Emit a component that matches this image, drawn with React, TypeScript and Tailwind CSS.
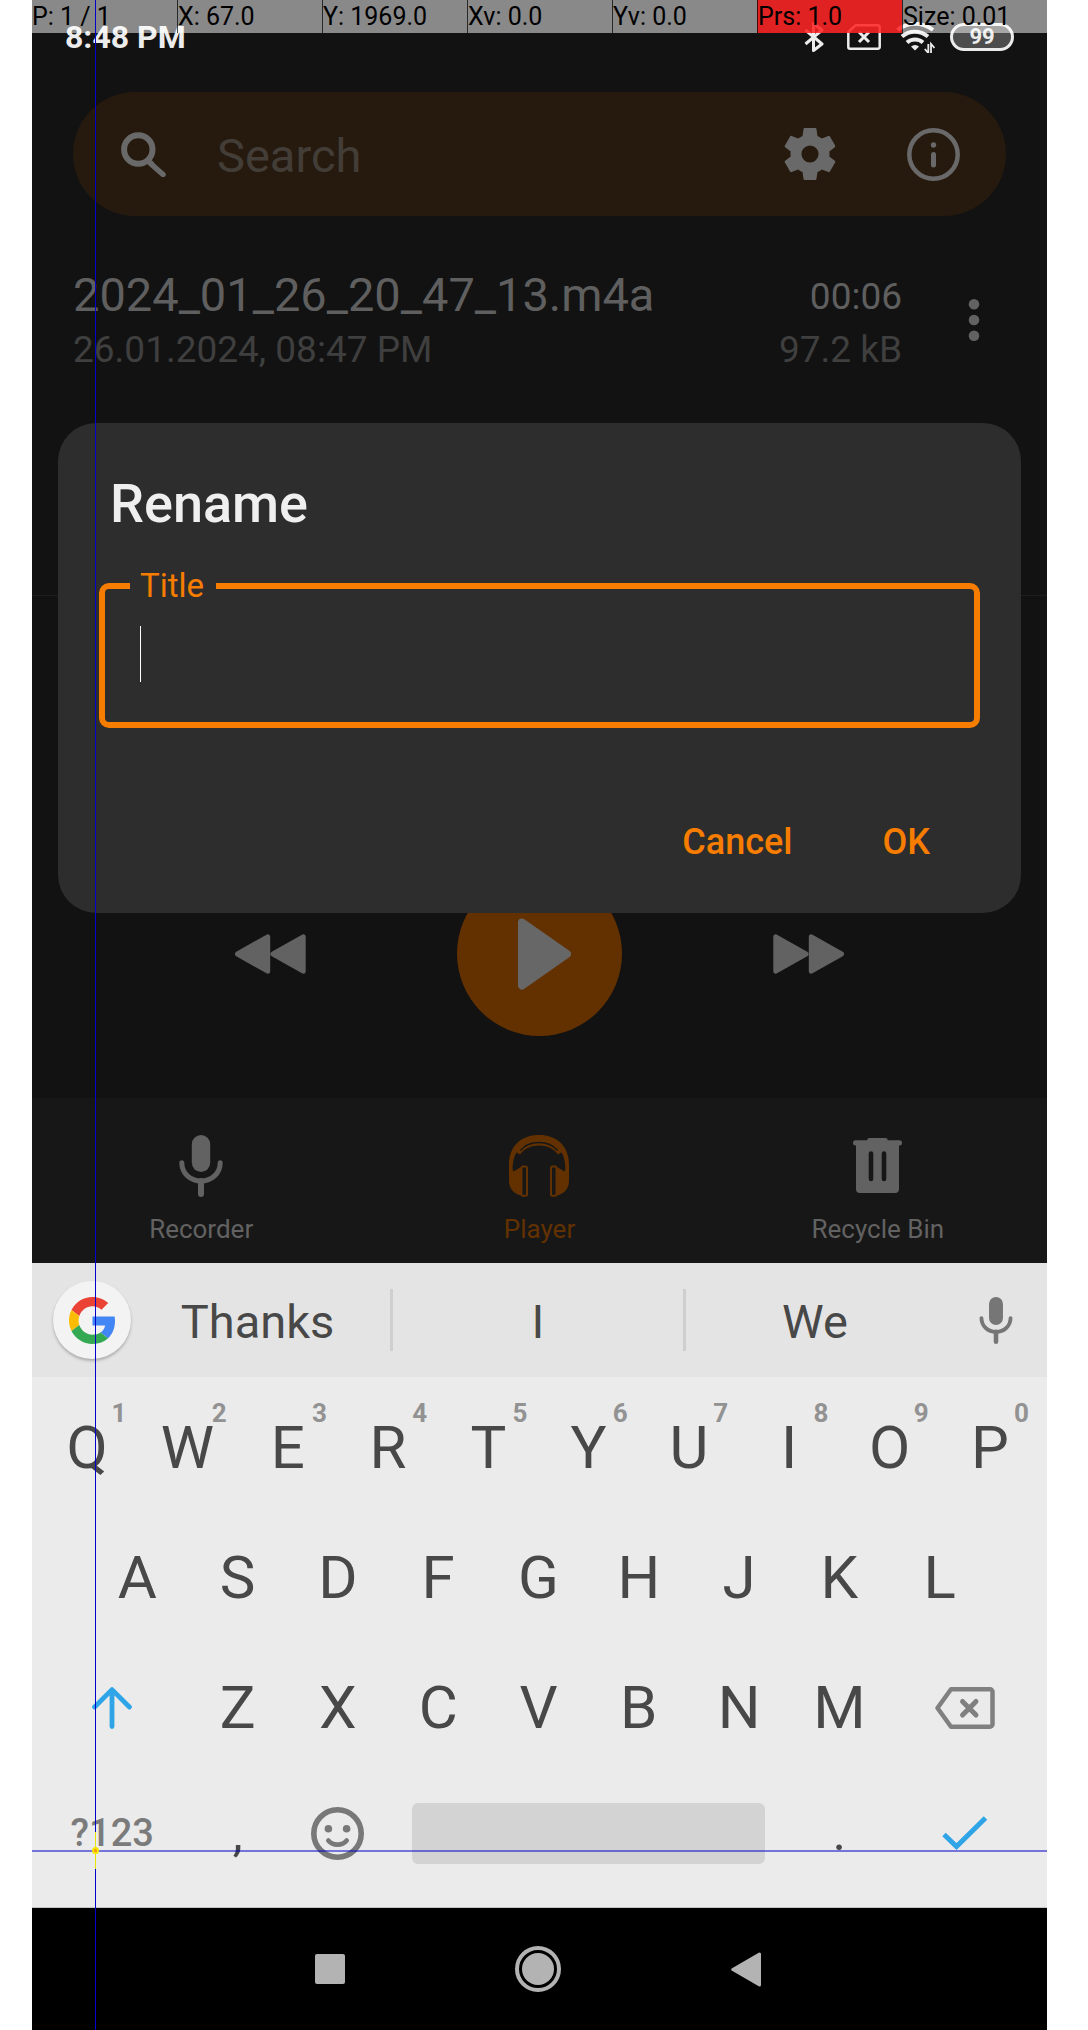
import React from "react";

type IconProps = { className?: string };

function SearchIcon({ className }: IconProps) {
  return (
    <svg viewBox="0 0 45 45" className={className} fill="none" stroke="currentColor" aria-hidden="true">
      <circle cx="17.3" cy="17.5" r="14.2" strokeWidth="6" />
      <path d="M29.5 31.5 42 42.5" strokeWidth="5.5" strokeLinecap="round" />
      <path d="M27 28l5 5" strokeWidth="5" />
    </svg>
  );
}

function GearIcon({ className }: IconProps) {
  return (
    <svg viewBox="2 2 20 20" className={className} fill="currentColor" aria-hidden="true">
      <path d="M19.43 12.98c.04-.32.07-.64.07-.98s-.03-.66-.07-.98l2.11-1.65c.19-.15.24-.42.12-.64l-2-3.46c-.12-.22-.39-.3-.61-.22l-2.49 1c-.52-.4-1.08-.73-1.69-.98l-.38-2.65C14.46 2.18 14.25 2 14 2h-4c-.25 0-.46.18-.49.42l-.38 2.65c-.61.25-1.17.59-1.69.98l-2.49-1c-.23-.09-.49 0-.61.22l-2 3.46c-.13.22-.07.49.12.64l2.11 1.65c-.04.32-.07.65-.07.98s.03.66.07.98l-2.11 1.65c-.19.15-.24.42-.12.64l2 3.46c.12.22.39.3.61.22l2.49-1c.52.4 1.08.73 1.69.98l.38 2.65c.03.24.24.42.49.42h4c.25 0 .46-.18.49-.42l.38-2.65c.61-.25 1.17-.59 1.69-.98l2.49 1c.23.09.49 0 .61-.22l2-3.46c.12-.22.07-.49-.12-.64l-2.11-1.65zM12 15.3a3.3 3.3 0 1 1 0-6.6 3.3 3.3 0 0 1 0 6.6z" />
    </svg>
  );
}

function InfoIcon({ className }: IconProps) {
  return (
    <svg viewBox="0 0 53 53" className={className} fill="none" stroke="currentColor" aria-hidden="true">
      <circle cx="26.5" cy="26.5" r="24.2" strokeWidth="4.5" />
      <circle cx="26.5" cy="17" r="2.7" fill="currentColor" stroke="none" />
      <path d="M26.5 26.5v10.5" strokeWidth="5" strokeLinecap="round" />
    </svg>
  );
}

function MicIcon({ className }: IconProps) {
  return (
    <svg viewBox="0 0 44 62" className={className} fill="none" stroke="currentColor" aria-hidden="true">
      <rect x="12.8" y="0" width="18.4" height="37" rx="9.2" fill="currentColor" stroke="none" />
      <path d="M2.8 27.8C2.8 38.5 11.5 46 22 46S41.2 38.5 41.2 27.8" strokeWidth="5" strokeLinecap="round" />
      <path d="M22 46v13" strokeWidth="6" strokeLinecap="round" />
    </svg>
  );
}

function HeadphonesIcon({ className }: IconProps) {
  return (
    <svg viewBox="0 0 60 62" className={className} fill="none" stroke="currentColor" aria-hidden="true">
      <path
        d="M0 30C0 10 13 0 30 0s30 10 30 30v6h-3.5C56.5 28 55 21 52.5 17.5L49 19.5C44.5 13.5 38 10.5 30 10.5S15.5 13.5 11 19.5L7.5 17.5C5 21 3.5 28 3.5 36H0Z"
        fill="currentColor"
        stroke="none"
      />
      <path d="M11.5 15.5C16 10 22 7.5 30 7.5s14 2.5 18.5 8" stroke="#171717" strokeWidth="1.6" />
      <path d="M0 28 4.5 36.5 12 32v28.5C5 58.5 0 54 0 46Z" fill="currentColor" stroke="none" />
      <path d="M60 28l-4.5 8.5L48 32v28.5C55 58.5 60 54 60 46Z" fill="currentColor" stroke="none" />
      <rect x="12.5" y="31.5" width="5.5" height="29.3" rx="1.5" fill="#171717" strokeWidth="2" />
      <rect x="42" y="31.5" width="5.5" height="29.3" rx="1.5" fill="#171717" strokeWidth="2" />
    </svg>
  );
}

function TrashIcon({ className }: IconProps) {
  return (
    <svg viewBox="0 0 49 55" className={className} fill="currentColor" aria-hidden="true">
      <rect x="0" y="2.3" width="49" height="5.2" rx="2.5" />
      <rect x="14.3" y="0" width="20.4" height="5" rx="2" />
      <path
        fillRule="evenodd"
        d="M3 6h43v45a4 4 0 0 1-4 4H7a4 4 0 0 1-4-4ZM18 13.2a2.3 2.3 0 0 0-2.3 2.3v25.5a2.3 2.3 0 0 0 4.6 0V15.5A2.3 2.3 0 0 0 18 13.2ZM31 13.2a2.3 2.3 0 0 0-2.3 2.3v25.5a2.3 2.3 0 0 0 4.6 0V15.5A2.3 2.3 0 0 0 31 13.2Z"
      />
    </svg>
  );
}

function ForwardIcon({ className }: IconProps) {
  return (
    <svg viewBox="0 0 71 40" className={className} fill="currentColor" stroke="currentColor" strokeWidth="5" strokeLinejoin="round" aria-hidden="true">
      <path d="M2.8 2.8 33 20 2.8 37.2ZM38.3 2.8 68.5 20 38.3 37.2Z" />
    </svg>
  );
}

function PlayIcon({ className }: IconProps) {
  return (
    <svg viewBox="0 0 53 72" className={className} fill="currentColor" stroke="currentColor" strokeWidth="8" strokeLinejoin="round" aria-hidden="true">
      <path d="M4 4.5 49 36 4 67.5Z" />
    </svg>
  );
}

function GoogleIcon({ className }: IconProps) {
  return (
    <svg viewBox="0 0 48 48" className={className} aria-hidden="true">
      <path fill="#EA4335" d="M24 9.5c3.54 0 6.71 1.22 9.21 3.6l6.85-6.85C35.9 2.38 30.47 0 24 0 14.62 0 6.51 5.38 2.56 13.22l7.98 6.19C12.43 13.72 17.74 9.5 24 9.5z" />
      <path fill="#4285F4" d="M46.98 24.55c0-1.57-.15-3.09-.38-4.55H24v9.02h12.94c-.58 2.96-2.26 5.48-4.78 7.18l7.73 6c4.51-4.18 7.09-10.36 7.09-17.65z" />
      <path fill="#FBBC05" d="M10.53 28.59c-.48-1.45-.76-2.99-.76-4.59s.27-3.14.76-4.59l-7.98-6.19C.92 16.46 0 20.12 0 24c0 3.88.92 7.54 2.56 10.78l7.97-6.19z" />
      <path fill="#34A853" d="M24 48c6.48 0 11.93-2.13 15.89-5.81l-7.73-6c-2.15 1.45-4.92 2.3-8.16 2.3-6.26 0-11.57-4.22-13.47-9.91l-7.98 6.19C6.51 42.62 14.62 48 24 48z" />
    </svg>
  );
}

function StatusIcons() {
  return (
    <div className="flex items-center gap-[15px]">
      <svg viewBox="0 0 20 32" className="mr-2 h-8 w-5" fill="none" stroke="currentColor" strokeWidth="3" aria-label="Bluetooth">
        <path d="M1.5 9 18 23 9.5 29.5V2.5L18 9 1.5 23" strokeLinejoin="round" />
      </svg>
      <svg viewBox="0 0 34 26" className="h-[26px] w-[34px]" fill="none" stroke="currentColor" strokeWidth="2.5" aria-label="No SIM">
        <path d="M8.5 1.3H31a1.7 1.7 0 0 1 1.7 1.7v20a1.7 1.7 0 0 1-1.7 1.7H3A1.7 1.7 0 0 1 1.3 23V8Z" strokeLinejoin="round" />
        <path d="M12 8l10 10M22 8 12 18" strokeWidth="3" />
      </svg>
      <svg viewBox="0 0 39 32" className="h-8 w-[39px]" fill="none" stroke="currentColor" strokeWidth="4" aria-label="Wi-Fi">
        <path d="M1.5 9C12 .5 26 .5 37 9" />
        <path d="M6 15.5c7.5-6.5 18-6.5 26 0" />
        <path d="M11 21.5c4.5-4 11.5-4 16 0" />
        <path d="M15 25.5c2.5-2 5.5-2 8 0L19 29.5Z" fill="currentColor" stroke="none" />
        <path d="M32.3 23v9l-3.5-4M35 32v-9l3.5 4" strokeWidth="1.8" />
      </svg>
      <span className="flex h-7 w-16 items-center justify-center rounded-full border-[3px] border-current bg-white/25 text-[22px] leading-[22px] font-bold">
        99
      </span>
    </div>
  );
}

const pointerCells = ["P: 1 / 1", "X: 67.0", "Y: 1969.0", "Xv: 0.0", "Yv: 0.0", "Prs: 1.0", "Size: 0.01"];

function PointerOverlay() {
  return (
    <div className="pointer-events-none absolute inset-0 z-20">
      <div className="grid grid-cols-7 bg-white/50 text-[25px] leading-[33px] text-black">
        {pointerCells.map((cell, i) => (
          <span
            key={cell}
            className={
              (i === 5 ? "bg-[#ff0000]/75 " : "") +
              (i === 0 ? "" : "border-l border-black/70 ") +
              "whitespace-nowrap"
            }
          >
            {cell}
          </span>
        ))}
      </div>
      <div className="absolute inset-y-0 left-[63px] w-px bg-[#0000c8]" />
      <div className="absolute inset-x-0 bottom-[178px] h-0.5 bg-[#0000c8]/50" />
      <div className="absolute bottom-[161px] left-[63px] h-[37px] w-px bg-[#e5e500]" />
      <div className="absolute bottom-[176px] left-[60px] size-[7px] rounded-full border-2 border-[#f5e500] bg-[#ff8c1a]" />
    </div>
  );
}

function RenameDialog() {
  return (
    <form
      role="dialog"
      aria-labelledby="dialog-title"
      onSubmit={(e) => e.preventDefault()}
      className="absolute inset-x-[26px] top-[423px] z-10 rounded-[38px] bg-[#2d2d2d] px-[41px] pt-[46px] pb-[26px]"
    >
      <h1 id="dialog-title" className="px-[11px] text-[54px] leading-[70px] font-medium text-[#efefef]">
        Rename
      </h1>
      <fieldset className="relative mt-[27px] rounded-[10px] border-[6px] border-[#f77d00] pl-[25px]">
        <legend className="h-10 pr-3 pl-2.5 text-[33px] leading-10 text-[#f77d00]">
          <label htmlFor="title">Title</label>
        </legend>
        <div className="flex items-center pt-5 pb-10 pl-[10px]">
          <span className="h-14 w-px bg-white" />
          <input id="title" type="text" className="h-14 w-full bg-transparent text-[46px] text-[#efefef] caret-transparent outline-none" />
        </div>
      </fieldset>
      <div className="mt-[69px] flex justify-end gap-[90px] pr-[50px] text-[36px] leading-[90px] font-medium text-[#f77d00]">
        <button type="button">Cancel</button>
        <button type="submit">OK</button>
      </div>
    </form>
  );
}

function NavItem({ icon, label, active }: { icon: React.ReactNode; label: string; active?: boolean }) {
  return (
    <button
      type="button"
      className={(active ? "text-[#633100] " : "text-[#626262] ") + "flex flex-col items-center pt-9 pb-4 text-[26px] leading-9"}
    >
      <span className="flex h-[63px] items-center justify-center">{icon}</span>
      <span className="mt-3.5">{label}</span>
    </button>
  );
}

function RecorderApp() {
  return (
    <main className="relative flex flex-1 flex-col bg-[#121212]">
      <div className="flex h-[74px] items-center justify-between px-[33px] text-[#ececec]">
        <time className="text-[32px] leading-8 font-bold">8:48 PM</time>
        <StatusIcons />
      </div>

      <div className="mx-[41px] mt-[18px] flex h-[124px] items-center rounded-full bg-[#261a0f] pr-[46px] pl-12 text-[#696969]">
        <SearchIcon className="size-[45px] shrink-0" />
        <input
          type="search"
          aria-label="Search"
          placeholder="Search"
          className="ml-[51px] min-w-0 flex-1 bg-transparent pt-1 text-[47px] leading-[60px] outline-none placeholder:text-[#433d37]"
        />
        <button type="button" aria-label="Settings">
          <GearIcon className="size-[52px]" />
        </button>
        <button type="button" aria-label="About" className="ml-[71px]">
          <InfoIcon className="size-[53px]" />
        </button>
      </div>

      <div className="mt-[49px] flex items-start px-[41px]">
        <div className="flex-1">
          <p className="text-[47px] leading-[60px] text-[#5f5f5f]">2024_01_26_20_47_13.m4a</p>
          <p className="text-[37px] leading-[50px] text-[#3f3f3f]">26.01.2024, 08:47 PM</p>
        </div>
        <div className="text-right text-[37px]">
          <p className="leading-[64px] text-[#5f5f5f]">00:06</p>
          <p className="leading-[42px] text-[#3f3f3f]">97.2 kB</p>
        </div>
        <button type="button" aria-label="More options" className="ml-10 flex w-16 justify-center self-center text-[#626262]">
          <svg viewBox="0 0 12 42" className="h-[42px] w-3" fill="currentColor" aria-hidden="true">
            <circle cx="6" cy="5.3" r="5.3" />
            <circle cx="6" cy="21" r="5.3" />
            <circle cx="6" cy="36.7" r="5.3" />
          </svg>
        </button>
      </div>

      <RenameDialog />

      <section aria-label="Playback" className="mt-auto border-t border-[#1d1d1d] pt-[275px] pb-[62px]">
        <div className="flex h-[165px] items-center justify-center gap-[151px] text-[#626262]">
          <button type="button" aria-label="Rewind">
            <ForwardIcon className="h-10 w-[71px] rotate-180" />
          </button>
          <button type="button" aria-label="Play" className="flex size-[165px] items-center justify-center rounded-full bg-[#633100] pl-[9px] text-[#676767]">
            <PlayIcon className="h-[72px] w-[53px]" />
          </button>
          <button type="button" aria-label="Fast forward">
            <ForwardIcon className="h-10 w-[71px]" />
          </button>
        </div>
      </section>

      <nav className="grid grid-cols-3 bg-[#171717]">
        <NavItem label="Recorder" icon={<MicIcon className="h-[62px] w-11" />} />
        <NavItem label="Player" active icon={<HeadphonesIcon className="h-[62px] w-[60px]" />} />
        <NavItem label="Recycle Bin" icon={<TrashIcon className="h-[55px] w-[49px]" />} />
      </nav>
    </main>
  );
}

function LetterKey({ letter, hint }: { letter: string; hint?: string }) {
  return (
    <button type="button" className="relative min-w-0 flex-[2] text-[60px]">
      {letter}
      {hint && (
        <span className="absolute top-3.5 right-[11px] text-[26px] leading-8 font-bold text-[#929292]">{hint}</span>
      )}
    </button>
  );
}

function Keyboard() {
  return (
    <section aria-label="Keyboard" className="border-b border-[#c4c4c4] bg-[#ebebeb] text-[#484848]">
      <div className="grid h-[114px] grid-cols-[93px_265fr_3px_290fr_3px_258fr_103px] items-center bg-[#e4e4e4] text-[47px] leading-[60px]">
        <button
          type="button"
          aria-label="Google search"
          className="ml-[21px] flex size-[78px] items-center justify-center rounded-full bg-[#f3f3f3] shadow-[0_2px_3px_rgba(0,0,0,0.25)]"
        >
          <GoogleIcon className="size-[47px]" />
        </button>
        <button type="button" className="pt-1">Thanks</button>
        <span className="h-[62px] bg-[#cfcfcf]" />
        <button type="button" className="pt-1">I</button>
        <span className="h-[62px] bg-[#cfcfcf]" />
        <button type="button" className="pt-1">We</button>
        <button type="button" aria-label="Voice input" className="flex justify-center text-[#767676]">
          <MicIcon className="h-[47px] w-[34px]" />
        </button>
      </div>

      <div className="pt-[6px] pr-[7px] pb-[14px] pl-[5px]">
        <div className="flex h-[130px]">
          {"QWERTYUIOP".split("").map((k, i) => (
            <LetterKey key={k} letter={k} hint={String((i + 1) % 10)} />
          ))}
        </div>
        <div className="flex h-[130px]">
          <span className="flex-1" />
          {"ASDFGHJKL".split("").map((k) => (
            <LetterKey key={k} letter={k} />
          ))}
          <span className="flex-1" />
        </div>
        <div className="flex h-[130px]">
          <button type="button" aria-label="Shift" className="flex min-w-0 flex-[3] items-center justify-center text-[#2fa4e7]">
            <svg viewBox="0 0 40 42" className="h-[42px] w-10" fill="none" stroke="currentColor" strokeWidth="4.8" strokeLinecap="round" strokeLinejoin="round" aria-hidden="true">
              <path d="M20 39.5V3M2.6 20 20 2.6 37.4 20" />
            </svg>
          </button>
          {"ZXCVBNM".split("").map((k) => (
            <LetterKey key={k} letter={k} />
          ))}
          <button type="button" aria-label="Backspace" className="flex min-w-0 flex-[3] items-center justify-center text-[#808080]">
            <svg viewBox="0 0 60 42" className="h-[42px] w-[60px]" fill="none" stroke="currentColor" strokeWidth="4.5" strokeLinejoin="round" aria-hidden="true">
              <path d="M16 2.3H55a2.5 2.5 0 0 1 2.5 2.5v32.4a2.5 2.5 0 0 1-2.5 2.5H16L2.5 21Z" />
              <path d="M27.5 14.5 41 28M41 14.5 27.5 28" strokeWidth="5" strokeLinecap="round" />
            </svg>
          </button>
        </div>
        <div className="flex h-[120px]">
          <button type="button" className="min-w-0 flex-[3] text-[38px] font-medium text-[#7b7b7b]">
            ?123
          </button>
          <button type="button" className="min-w-0 flex-[2] text-[50px]">
            ,
          </button>
          <button type="button" aria-label="Emoji" className="flex min-w-0 flex-[2] items-center justify-center text-[#787878]">
            <svg viewBox="0 0 53 53" className="size-[53px]" fill="none" stroke="currentColor" aria-hidden="true">
              <circle cx="26.5" cy="26.5" r="23.7" strokeWidth="5.6" />
              <circle cx="17.4" cy="21.8" r="3.8" fill="currentColor" stroke="none" />
              <circle cx="35.6" cy="21.8" r="3.8" fill="currentColor" stroke="none" />
              <path d="M17.3 33.5c4.5 5.5 13.9 5.5 18.4 0" strokeWidth="4.6" strokeLinecap="round" />
            </svg>
          </button>
          <div className="flex min-w-0 flex-[8] items-center">
            <button type="button" aria-label="Space" className="mx-6 h-[61px] flex-1 rounded-md bg-[#d3d3d3]" />
          </div>
          <button type="button" className="min-w-0 flex-[2] text-[50px]">
            .
          </button>
          <button type="button" aria-label="Done" className="flex min-w-0 flex-[3] items-center justify-center text-[#2fa4e7]">
            <svg viewBox="0 0 46 34" className="h-[34px] w-[46px]" fill="none" stroke="currentColor" strokeWidth="5" aria-hidden="true">
              <path d="M2 18.5 14.5 30.5 43.5 2" />
            </svg>
          </button>
        </div>
      </div>
    </section>
  );
}

function SystemNav() {
  return (
    <nav aria-label="System" className="flex h-[122px] items-center justify-center bg-black pr-1 text-[#b3b3b3]">
      <button type="button" aria-label="Recent apps" className="flex w-52 justify-center">
        <span className="size-[30px] rounded-xs bg-current" />
      </button>
      <button type="button" aria-label="Home" className="flex w-52 justify-center">
        <span className="flex size-[46px] items-center justify-center rounded-full border-4 border-current">
          <span className="size-8 rounded-full bg-current" />
        </span>
      </button>
      <button type="button" aria-label="Back" className="flex w-52 justify-center">
        <svg viewBox="0 0 30 35" className="h-[35px] w-[30px]" fill="currentColor" stroke="currentColor" strokeWidth="3" strokeLinejoin="round" aria-hidden="true">
          <path d="M28.5 2v31L1.8 17.5Z" />
        </svg>
      </button>
    </nav>
  );
}

export default function App() {
  return (
    <div className="min-h-screen bg-white pr-[41px] pl-8 font-[Roboto,sans-serif]">
      <div className="relative flex min-h-screen flex-col">
        <RecorderApp />
        <Keyboard />
        <SystemNav />
        <PointerOverlay />
      </div>
    </div>
  );
}
